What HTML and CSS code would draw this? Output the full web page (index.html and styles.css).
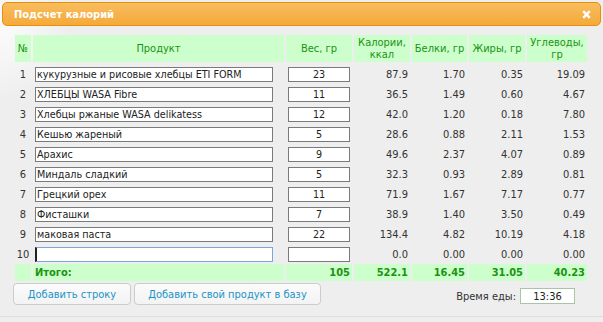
FILE: index.html
```html
<!DOCTYPE html>
<html>
<head>
    <title>Подсчет калорий</title>
    <link rel="stylesheet" href="styles.css">
</head>
<body>
    <div class="dialog">
        <div class="titlebar">
            <span class="title">Подсчет калорий</span>
            <span class="close">
                <svg width="9" height="9" viewBox="0 0 9 9"><path d="M1.2 1.2 L7.8 7.8 M7.8 1.2 L1.2 7.8" stroke="#fff" stroke-width="2.4" fill="none"/></svg>
            </span>
        </div>

        <div class="content">
            <table class="calc">
                <thead>
                    <tr>
                        <th class="c-num">№</th>
                        <th class="c-prod">Продукт</th>
                        <th class="c-weight">Вес, гр</th>
                        <th class="c-kcal">Калории,<br>ккал</th>
                        <th class="c-prot">Белки, гр</th>
                        <th class="c-fat">Жиры, гр</th>
                        <th class="c-carb">Углеводы,<br>гр</th>
                    </tr>
                </thead>
                <tbody>
                    <tr>
                        <td class="num">1</td>
                        <td><input class="prod-input" type="text" value="кукурузные и рисовые хлебцы ETI FORM"></td>
                        <td><input class="weight-input" type="text" value="23"></td>
                        <td class="val">87.9</td><td class="val">1.70</td><td class="val">0.35</td><td class="val">19.09</td>
                    </tr>
                    <tr>
                        <td class="num">2</td>
                        <td><input class="prod-input" type="text" value="ХЛЕБЦЫ WASA Fibre"></td>
                        <td><input class="weight-input" type="text" value="11"></td>
                        <td class="val">36.5</td><td class="val">1.49</td><td class="val">0.60</td><td class="val">4.67</td>
                    </tr>
                    <tr>
                        <td class="num">3</td>
                        <td><input class="prod-input" type="text" value="Хлебцы ржаные WASA delikatess"></td>
                        <td><input class="weight-input" type="text" value="12"></td>
                        <td class="val">42.0</td><td class="val">1.20</td><td class="val">0.18</td><td class="val">7.80</td>
                    </tr>
                    <tr>
                        <td class="num">4</td>
                        <td><input class="prod-input" type="text" value="Кешью жареный"></td>
                        <td><input class="weight-input" type="text" value="5"></td>
                        <td class="val">28.6</td><td class="val">0.88</td><td class="val">2.11</td><td class="val">1.53</td>
                    </tr>
                    <tr>
                        <td class="num">5</td>
                        <td><input class="prod-input" type="text" value="Арахис"></td>
                        <td><input class="weight-input" type="text" value="9"></td>
                        <td class="val">49.6</td><td class="val">2.37</td><td class="val">4.07</td><td class="val">0.89</td>
                    </tr>
                    <tr>
                        <td class="num">6</td>
                        <td><input class="prod-input" type="text" value="Миндаль сладкий"></td>
                        <td><input class="weight-input" type="text" value="5"></td>
                        <td class="val">32.3</td><td class="val">0.93</td><td class="val">2.89</td><td class="val">0.81</td>
                    </tr>
                    <tr>
                        <td class="num">7</td>
                        <td><input class="prod-input" type="text" value="Грецкий орех"></td>
                        <td><input class="weight-input" type="text" value="11"></td>
                        <td class="val">71.9</td><td class="val">1.67</td><td class="val">7.17</td><td class="val">0.77</td>
                    </tr>
                    <tr>
                        <td class="num">8</td>
                        <td><input class="prod-input" type="text" value="Фисташки"></td>
                        <td><input class="weight-input" type="text" value="7"></td>
                        <td class="val">38.9</td><td class="val">1.40</td><td class="val">3.50</td><td class="val">0.49</td>
                    </tr>
                    <tr>
                        <td class="num">9</td>
                        <td><input class="prod-input" type="text" value="маковая паста"></td>
                        <td><input class="weight-input" type="text" value="22"></td>
                        <td class="val">134.4</td><td class="val">4.82</td><td class="val">10.19</td><td class="val">4.18</td>
                    </tr>
                    <tr>
                        <td class="num">10</td>
                        <td><input class="prod-input focused" type="text" value=""></td>
                        <td><input class="weight-input" type="text" value=""></td>
                        <td class="val">0.0</td><td class="val">0.00</td><td class="val">0.00</td><td class="val">0.00</td>
                    </tr>
                </tbody>
                <tfoot>
                    <tr>
                        <td></td>
                        <td class="total-label">Итого:</td>
                        <td class="val">105</td>
                        <td class="val">522.1</td>
                        <td class="val">16.45</td>
                        <td class="val">31.05</td>
                        <td class="val">40.23</td>
                    </tr>
                </tfoot>
            </table>

            <div class="actions">
                <button class="btn btn-row">Добавить строку</button>
                <button class="btn btn-base">Добавить свой продукт в базу</button>
                <div class="meal-time">
                    <span class="meal-label">Время еды:</span>
                    <input class="time-input" type="text" value="13:36">
                </div>
            </div>
        </div>
    </div>
</body>
</html>
```

FILE: styles.css
```css
body {
    margin: 0;
    background: #eeeeee;
    font-family: Tahoma, "DejaVu Sans Condensed", "DejaVu Sans", sans-serif;
    font-size: 11px;
    color: #333;
}
.dialog {
    width: 603px;
    height: 317px;
    box-sizing: border-box;
    padding: 2px 2px 0;
    border-bottom: 1px solid #dddddd;
    background: radial-gradient(circle at 0 30px, #fbfbfb 0, #eeeeee 70px);
}
.titlebar {
    height: 24px;
    box-sizing: border-box;
    display: flex;
    align-items: center;
    justify-content: space-between;
    padding: 0 9px 0 11px;
    border: 1px solid #e78f08;
    border-radius: 5px;
    background: linear-gradient(to bottom, #f8bd5e 0%, #f6b34c 50%, #f5a93a 100%);
    color: #fff;
}
.title {
    font-weight: bold;
    font-size: 11px;
}
.close {
    display: flex;
    width: 9px;
    height: 9px;
}
.content {
    padding: 7px 0 0 11px;
}
.calc {
    border-collapse: separate;
    border-spacing: 2px;
    table-layout: fixed;
    width: 576px;
}
.calc th {
    box-sizing: border-box;
    height: 27px;
    padding: 0 1px;
    background: #ccffcc;
    color: #1c9312;
    font-weight: normal;
    line-height: 12px;
    text-align: center;
}
.c-num { width: 16px; }
.c-prod { width: 251px; }
.c-weight { width: 66px; }
.c-kcal { width: 56px; }
.c-prot { width: 55px; }
.c-fat { width: 56px; }
.c-carb { width: 60px; }
.calc td {
    height: 18px;
    box-sizing: border-box;
    padding: 3px 2px 0;
    line-height: 15px;
    vertical-align: top;
    white-space: nowrap;
}
.calc td.num {
    text-align: center;
    padding: 3px 0 0;
}
.calc td.val {
    text-align: right;
}
.prod-input,
.weight-input {
    display: block;
    box-sizing: border-box;
    height: 15px;
    margin: 0;
    padding: 0 1px;
    border: 1px solid #7a7a7a;
    background: #fff;
    font-family: inherit;
    font-size: 10.7px;
    color: #222;
}
.prod-input { width: 238px; }
.weight-input {
    width: 62px;
    text-align: center;
}
.prod-input.focused {
    border-color: #7aa7dc;
    border-left: 2px solid #222;
    padding-left: 0;
}
.calc tfoot td {
    height: 17px;
    padding-top: 1px;
    background: #ccffcc;
    color: #1c9312;
    font-weight: bold;
}
.actions {
    display: flex;
    align-items: center;
    gap: 3px;
}
.btn {
    height: 22px;
    box-sizing: border-box;
    margin: 0;
    padding: 0;
    border: 1px solid #cccccc;
    border-radius: 4px;
    background: linear-gradient(to bottom, #fbfbfb, #f3f3f3);
    color: #1c94c4;
    font-family: inherit;
    font-size: 11px;
    white-space: nowrap;
}
.btn-row { width: 118px; }
.btn-base { width: 187px; }
.meal-time {
    display: flex;
    align-items: center;
    gap: 4px;
    margin-left: auto;
    margin-right: 26px;
    padding-top: 4px;
}
.meal-label {
    color: #333;
}
.time-input {
    width: 55px;
    height: 16px;
    box-sizing: border-box;
    margin: 0;
    padding: 0;
    border: 1px solid #a9c4a9;
    background: #fff;
    font-family: inherit;
    font-size: 11px;
    color: #222;
    text-align: center;
}
```
